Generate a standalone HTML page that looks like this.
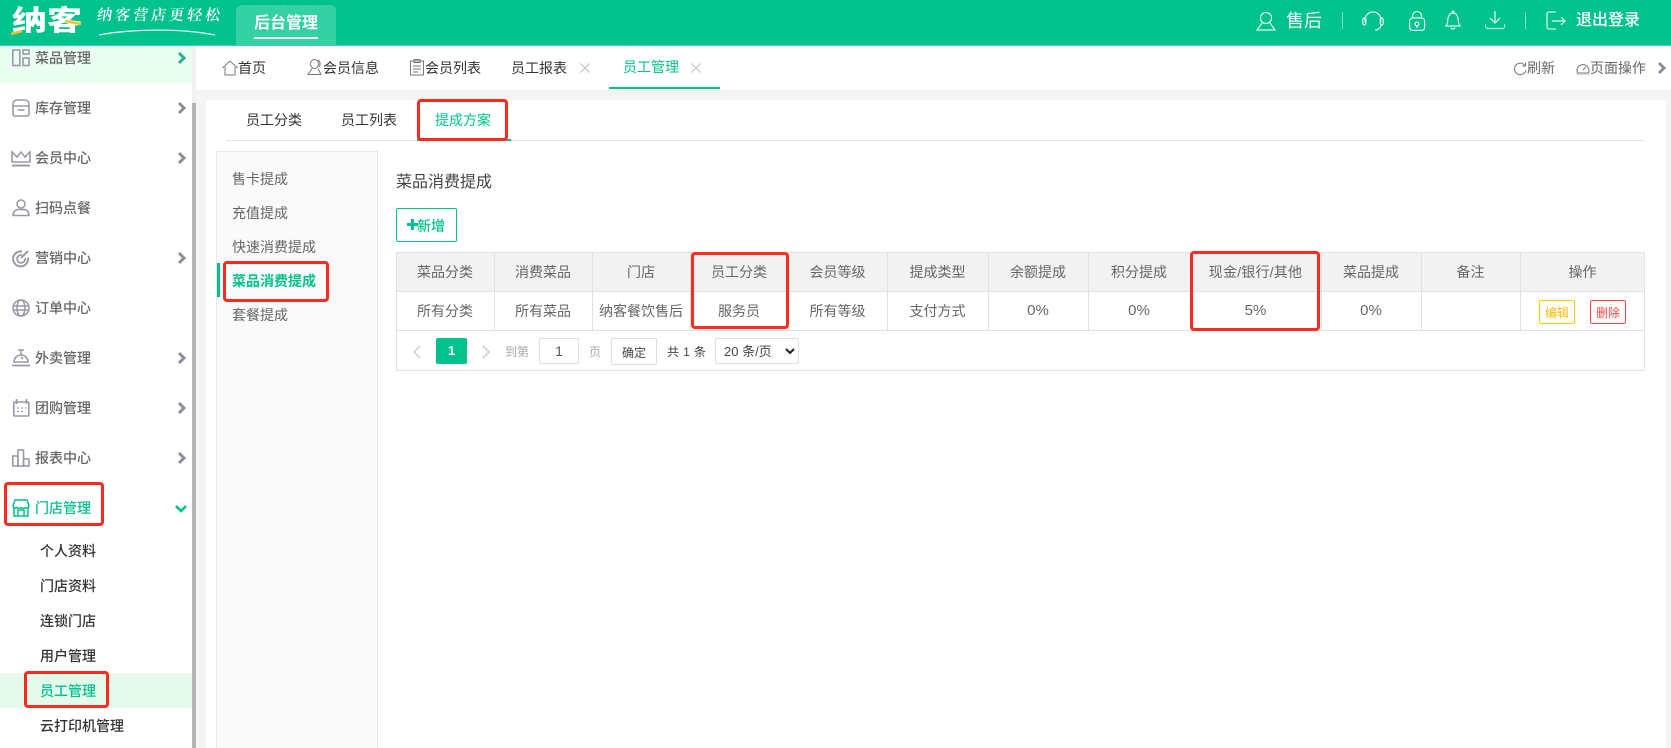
<!DOCTYPE html>
<html lang="zh">
<head>
<meta charset="utf-8">
<title>纳客</title>
<style>
*{box-sizing:border-box;margin:0;padding:0}
html,body{width:1671px;height:748px;overflow:hidden;background:#f4f4f4}
body{position:relative;font-family:"Liberation Sans","Noto Sans CJK SC",sans-serif;font-size:14px;color:#666}
.a{position:absolute}
.t{position:absolute;white-space:nowrap;line-height:20px;height:20px}
svg{position:absolute;overflow:visible;fill:none}
.m{left:35px;color:#666;font-weight:500}
.s{left:40px;color:#333;font-weight:500}
.red{position:absolute;border:3px solid #ff2a1f;border-radius:4px}
.hl{position:absolute;background:#e1e1e1}
.c{position:absolute;text-align:center;line-height:20px;height:20px;white-space:nowrap;color:#666}
.b{position:absolute;background:#fff;border:1px solid #dfdfdf;border-radius:2px;text-align:center;color:#555}
.g{stroke:#9a9aa6;stroke-width:1.6}
.w{stroke:#e0f8ef;stroke-width:1.2}
.d{stroke:#777;stroke-width:1}
.chev{stroke:#8e8e9a;stroke-width:3}
</style>
</head>
<body>
<!-- header -->
<div class="a" style="left:0;top:0;width:1671px;height:46px;background:#00c28c;border-bottom:1px solid #3fd4a8"></div>
<div class="t" style="left:12px;top:1px;height:40px;line-height:40px;font-size:33px;font-weight:900;color:#fff;transform:scale(1.06,.84);transform-origin:left center">纳客</div>
<svg style="left:0;top:0" width="90" height="45"><path d="M11 34l11-3" stroke="#f4c430" stroke-width="2.5"/><path d="M65 21l16 3" stroke="#f4c430" stroke-width="2.5"/></svg>
<div class="t" style="left:97px;top:6px;font-family:'Liberation Serif','Noto Serif CJK SC',serif;font-size:15px;font-weight:600;color:#fff;letter-spacing:3px;transform:skewX(-8deg)">纳客营店更轻松</div>
<svg style="left:0;top:0" width="240" height="45"><path d="M99 35C130 29 180 28 215 35" stroke="#e4f9f1" stroke-width="1.300"/></svg>
<div class="a" style="left:236px;top:5px;width:100px;height:40px;background:#33d1a3;border-radius:6px 6px 0 0"></div>
<div class="t" style="left:254px;top:14px;font-size:16px;font-weight:700;color:#fff">后台管理</div>
<div class="a" style="left:254px;top:37px;width:64px;height:2px;background:#fff"></div>

<svg style="left:1256px;top:11px" width="20" height="20" class="w"><circle cx="10" cy="7" r="5.500"/><path d="M6 12L1 19h18l-5-7"/></svg>
<div class="t" style="left:1286px;top:11px;font-size:18px;color:#fff">售后</div>
<div class="a" style="left:1342px;top:12px;width:1px;height:17px;background:#7fe0c5"></div>
<svg style="left:1362px;top:11px" width="22" height="20" class="w"><path d="M3 11V9a8 8 0 0 1 16 0v2"/><rect x=".8" y="7" width="3" height="7" rx="1.500"/><rect x="18.200" y="7" width="3" height="7" rx="1.500"/><path d="M19 14c0 3-3 5-6 5"/></svg>
<svg style="left:1409px;top:11px" width="16" height="20" class="w"><rect x=".6" y="7" width="15" height="12.400" rx="3"/><path d="M3.500 7V5a4.500 4.500 0 0 1 9 0v2"/><circle cx="8" cy="13" r="2"/><path d="M8 15v2"/></svg>
<svg style="left:1445px;top:10px" width="16" height="21" class="w"><path d="M1 16c2-2 1.500-5 2-8s2.500-5 5-5 4.500 2 5 5 0 6 2 8z"/><circle cx="8" cy="2" r="1"/><path d="M6 17.500c.5 2 3.500 2 4 0"/></svg>
<svg style="left:1485px;top:10px" width="20" height="20" class="w"><path d="M10 1v12M5 8l5 5 5-5"/><path d="M.6 14v2.500a2 2 0 0 0 2 2h15a2 2 0 0 0 2-2V14" stroke="#a8ecd8"/></svg>
<div class="a" style="left:1525px;top:12px;width:1px;height:17px;background:#7fe0c5"></div>
<svg style="left:1546px;top:11px" width="20" height="20" class="w"><path d="M10 1H3a2 2 0 0 0-2 2v13a2 2 0 0 0 2 2h7" stroke="#a8ecd8" stroke-width="1.600"/><path d="M6 10h13M15 6l4 4-4 4"/></svg>
<div class="t" style="left:1576px;top:11px;font-size:16px;font-weight:500;color:#fff">退出登录</div>

<!-- sidebar -->
<div class="a" style="left:0;top:46px;width:192px;height:702px;background:#fff"></div>
<div class="a" style="left:192px;top:46px;width:4px;height:57px;background:#f1f1f1"></div>
<div class="a" style="left:192px;top:103px;width:4px;height:645px;background:#b3b3b3"></div>
<div class="a" style="left:0;top:46px;width:192px;height:37px;background:#eafff1"></div>
<div class="a" style="left:0;top:673px;width:192px;height:35px;background:#e4fbeb"></div>

<svg style="left:12px;top:49px" width="18" height="18" class="g"><rect x=".8" y="1" width="7" height="15.500"/><rect x="11" y="1" width="6" height="4"/><rect x="11" y="9" width="6" height="7.500"/></svg>
<svg style="left:12px;top:99px" width="18" height="18" class="g"><path d="M1 7V5a4 4 0 0 1 4-4h8a4 4 0 0 1 4 4v2z"/><path d="M1 7v8a2 2 0 0 0 2 2h12a2 2 0 0 0 2-2V7"/><path d="M5.500 11h7"/></svg>
<svg style="left:11px;top:150px" width="20" height="18" class="g"><path d="M1 2l5 5 4-5 4 5 5-5v10H1z"/><path d="M1 15.500h18" stroke-width="2"/></svg>
<svg style="left:12px;top:199px" width="18" height="18" class="g"><circle cx="9" cy="5" r="4"/><path d="M1 16.500c0-4 3-6 5-6h6c2 0 5 2 5 6z"/></svg>
<svg style="left:12px;top:249px" width="18" height="18" class="g"><path d="M10 2.500a7.500 7.500 0 1 0 6 6" stroke-width="2"/><path d="M10 6a4 4 0 1 0 3 3" stroke-width="1.800"/><path d="M9 9l7-7" stroke-width="2"/></svg>
<svg style="left:12px;top:299px" width="18" height="18" class="g"><circle cx="9" cy="9" r="8"/><ellipse cx="9" cy="9" rx="4" ry="8"/><path d="M1 7h16M1 11h16"/></svg>
<svg style="left:12px;top:349px" width="18" height="18" class="g"><path d="M2 13a7 7 0 0 1 14 0z"/><path d="M0 16.500h18" stroke-width="1.800"/><path d="M6 1h6M9 1v5M9 8l2 2"/></svg>
<svg style="left:13px;top:399px" width="17" height="18" class="g"><rect x=".8" y="3" width="15" height="14" rx="1"/><path d="M3.500 0v5M13.500 0v5"/><path d="M4 9h2M8 9h2M12 9h1.500M4 12.500h2M8 12.500h2" stroke-width="1.300"/></svg>
<svg style="left:12px;top:449px" width="18" height="18" class="g"><rect x=".8" y="7" width="5" height="10"/><rect x="6" y="1" width="5.500" height="16"/><rect x="11.500" y="10" width="5.500" height="7"/></svg>
<svg style="left:12px;top:499px" width="18" height="18" stroke="#00c28c" stroke-width="1.500"><path d="M3 1h12l2 6a2.500 2.500 0 0 1-4 1.500 3 3 0 0 1-4 0 3 3 0 0 1-4 0A2.500 2.500 0 0 1 1 7z"/><path d="M2 9v8h14V9M6 17v-6h6v6"/></svg>

<div class="t m" style="top:48px">菜品管理</div>
<div class="t m" style="top:98px">库存管理</div>
<div class="t m" style="top:148px">会员中心</div>
<div class="t m" style="top:198px">扫码点餐</div>
<div class="t m" style="top:248px">营销中心</div>
<div class="t m" style="top:298px">订单中心</div>
<div class="t m" style="top:348px">外卖管理</div>
<div class="t m" style="top:398px">团购管理</div>
<div class="t m" style="top:448px">报表中心</div>
<div class="t m" style="top:498px;color:#00c28c">门店管理</div>
<div class="t s" style="top:541px">个人资料</div>
<div class="t s" style="top:576px">门店资料</div>
<div class="t s" style="top:611px">连锁门店</div>
<div class="t s" style="top:646px">用户管理</div>
<div class="t s" style="top:681px;color:#00c28c">员工管理</div>
<div class="t s" style="top:716px">云打印机管理</div>

<svg style="left:178px;top:52px" width="8" height="14" stroke="#2fae8c" stroke-width="3"><path d="M1 1l5 5-5 5"/></svg>
<svg style="left:178px;top:102px" width="8" height="14" class="chev"><path d="M1 1l5 5-5 5"/></svg>
<svg style="left:178px;top:152px" width="8" height="14" class="chev"><path d="M1 1l5 5-5 5"/></svg>
<svg style="left:178px;top:252px" width="8" height="14" class="chev"><path d="M1 1l5 5-5 5"/></svg>
<svg style="left:178px;top:352px" width="8" height="14" class="chev"><path d="M1 1l5 5-5 5"/></svg>
<svg style="left:178px;top:402px" width="8" height="14" class="chev"><path d="M1 1l5 5-5 5"/></svg>
<svg style="left:178px;top:452px" width="8" height="14" class="chev"><path d="M1 1l5 5-5 5"/></svg>
<svg style="left:175px;top:505px" width="12" height="8" stroke="#00c28c" stroke-width="2.600"><path d="M1 1l5 5 5-5"/></svg>

<div class="red" style="left:4px;top:482px;width:100px;height:44px"></div>
<div class="red" style="left:24px;top:671px;width:85px;height:37px"></div>

<!-- tab bar -->
<div class="a" style="left:196px;top:46px;width:1475px;height:44px;background:#fff"></div>
<svg style="left:222px;top:60px" width="16" height="16" class="d"><path d="M.5 8L8 1l7.500 7M3 7v8h10V7"/></svg>
<div class="t" style="left:238px;top:58px;color:#333">首页</div>
<svg style="left:307px;top:59px" width="16" height="17" class="d"><ellipse cx="7.500" cy="5" rx="4" ry="4.500"/><path d="M5 9.500L1 15.500h13l-3-6M11 1c2 1 3 4 1 7"/></svg>
<div class="t" style="left:323px;top:58px;color:#333">会员信息</div>
<svg style="left:410px;top:59px" width="14" height="17" class="d"><rect x=".5" y="2" width="13" height="14"/><rect x="4" y=".5" width="6" height="3"/><path d="M3 7h8M3 10h8M3 13h5"/></svg>
<div class="t" style="left:425px;top:58px;color:#333">会员列表</div>
<div class="t" style="left:511px;top:58px;color:#333">员工报表</div>
<svg style="left:580px;top:63px" width="10" height="10" stroke="#c4c4c4" stroke-width="1.200"><path d="M.5.500l9 9M9.500.500l-9 9"/></svg>
<div class="t" style="left:623px;top:57px;color:#00c28c">员工管理</div>
<svg style="left:691px;top:63px" width="10" height="10" stroke="#c4c4c4" stroke-width="1.200"><path d="M.5.500l9 9M9.500.500l-9 9"/></svg>
<div class="a" style="left:609px;top:87px;width:111px;height:2px;background:#00c28c"></div>

<svg style="left:1514px;top:62px" width="13" height="13" class="d"><path d="M11 3.500A5.800 5.800 0 1 0 12 8M11.500 .5v3.500H8"/></svg>
<div class="t" style="left:1527px;top:58px;color:#666">刷新</div>
<svg style="left:1576px;top:62px" width="14" height="13" class="d"><path d="M1.500 11a6 6 0 1 1 11 0z"/><path d="M7 8l3-3"/><path d="M.5 12h13" stroke="#ccc" stroke-width="1.500"/></svg>
<div class="t" style="left:1590px;top:58px;color:#666">页面操作</div>
<svg style="left:1658px;top:62px" width="8" height="14" class="chev"><path d="M1 1l5 5-5 5"/></svg>

<!-- content -->
<div class="a" style="left:206px;top:100px;width:1460px;height:648px;background:#fff"></div>
<div class="t" style="left:246px;top:110px;color:#333">员工分类</div>
<div class="t" style="left:341px;top:110px;color:#333">员工列表</div>
<div class="t" style="left:435px;top:110px;color:#00c28c">提成方案</div>
<div class="a" style="left:226px;top:140px;width:1419px;height:1px;background:#e4e4e4"></div>
<div class="a" style="left:417px;top:139px;width:94px;height:2px;background:#00c28c"></div>
<div class="red" style="left:417px;top:99px;width:91px;height:42px"></div>

<!-- left submenu -->
<div class="a" style="left:216px;top:151px;width:162px;height:597px;background:#fafafa;border:1px solid #e9e9e9;border-bottom:0"></div>
<div class="t" style="left:232px;top:169px">售卡提成</div>
<div class="t" style="left:232px;top:203px">充值提成</div>
<div class="t" style="left:232px;top:237px">快速消费提成</div>
<div class="a" style="left:217px;top:263px;width:3px;height:34px;background:#00c28c"></div>
<div class="t" style="left:232px;top:271px;color:#00c28c;font-weight:700">菜品消费提成</div>
<div class="t" style="left:232px;top:305px">套餐提成</div>
<div class="red" style="left:223px;top:261px;width:106px;height:41px"></div>

<!-- main -->
<div class="t" style="left:396px;top:173px;font-size:16px;color:#444">菜品消费提成</div>
<div class="a" style="left:396px;top:208px;width:61px;height:34px;border:1px solid #00c28c;border-radius:2px"></div>
<svg style="left:407px;top:219px" width="11" height="11" stroke="#00c28c" stroke-width="3"><path d="M5.500 0v11M0 5.500h11"/></svg>
<div class="t" style="left:417px;top:216px;font-weight:500;color:#00c28c">新增</div>

<!-- table -->
<div class="a" style="left:396px;top:252px;width:1249px;height:39px;background:#f2f2f2"></div>
<div class="a" style="left:396px;top:252px;width:1249px;height:119px;border:1px solid #e3e3e3"></div>
<div class="hl" style="left:396px;top:291px;width:1249px;height:1px"></div>
<div class="hl" style="left:396px;top:330px;width:1249px;height:1px"></div>
<div class="hl" style="left:494px;top:252px;width:1px;height:78px"></div>
<div class="hl" style="left:592px;top:252px;width:1px;height:78px"></div>
<div class="hl" style="left:690px;top:252px;width:1px;height:78px"></div>
<div class="hl" style="left:788px;top:252px;width:1px;height:78px"></div>
<div class="hl" style="left:887px;top:252px;width:1px;height:78px"></div>
<div class="hl" style="left:988px;top:252px;width:1px;height:78px"></div>
<div class="hl" style="left:1088px;top:252px;width:1px;height:78px"></div>
<div class="hl" style="left:1190px;top:252px;width:1px;height:78px"></div>
<div class="hl" style="left:1321px;top:252px;width:1px;height:78px"></div>
<div class="hl" style="left:1421px;top:252px;width:1px;height:78px"></div>
<div class="hl" style="left:1520px;top:252px;width:1px;height:78px"></div>

<div class="c" style="left:396px;top:262px;width:98px">菜品分类</div>
<div class="c" style="left:494px;top:262px;width:98px">消费菜品</div>
<div class="c" style="left:592px;top:262px;width:98px">门店</div>
<div class="c" style="left:690px;top:262px;width:98px">员工分类</div>
<div class="c" style="left:788px;top:262px;width:99px">会员等级</div>
<div class="c" style="left:887px;top:262px;width:101px">提成类型</div>
<div class="c" style="left:988px;top:262px;width:100px">余额提成</div>
<div class="c" style="left:1088px;top:262px;width:102px">积分提成</div>
<div class="c" style="left:1190px;top:262px;width:131px;letter-spacing:.2px">现金/银行/其他</div>
<div class="c" style="left:1321px;top:262px;width:100px">菜品提成</div>
<div class="c" style="left:1421px;top:262px;width:99px">备注</div>
<div class="c" style="left:1520px;top:262px;width:125px">操作</div>

<div class="c" style="left:396px;top:301px;width:98px">所有分类</div>
<div class="c" style="left:494px;top:301px;width:98px">所有菜品</div>
<div class="c" style="left:592px;top:301px;width:98px;font-size:14px">纳客餐饮售后</div>
<div class="c" style="left:690px;top:301px;width:98px">服务员</div>
<div class="c" style="left:788px;top:301px;width:99px">所有等级</div>
<div class="c" style="left:887px;top:301px;width:101px">支付方式</div>
<div class="c" style="left:988px;top:301px;width:100px;font-size:15px">0%</div>
<div class="c" style="left:1088px;top:301px;width:102px;font-size:15px">0%</div>
<div class="c" style="left:1190px;top:301px;width:131px;font-size:15px">5%</div>
<div class="c" style="left:1321px;top:301px;width:100px;font-size:15px">0%</div>
<div class="b" style="left:1539px;top:300px;width:36px;height:24px;border-color:#fc0;color:#fb0;font-size:12px;line-height:24px">编辑</div>
<div class="b" style="left:1590px;top:300px;width:36px;height:24px;border-color:#f44;color:#f44;font-size:12px;line-height:24px">删除</div>

<div class="red" style="left:691px;top:252px;width:98px;height:77px"></div>
<div class="red" style="left:1190px;top:251px;width:130px;height:80px"></div>

<!-- pagination -->
<svg style="left:413px;top:345px" width="8" height="14" stroke="#ccc" stroke-width="1.500"><path d="M7 1L1 7l6 6"/></svg>
<div class="a" style="left:436px;top:338px;width:31px;height:26px;background:#00c28c;border-radius:2px;color:#fff;font-weight:700;font-size:13px;line-height:26px;text-align:center">1</div>
<svg style="left:482px;top:345px" width="8" height="14" stroke="#ccc" stroke-width="1.500"><path d="M1 1l6 6-6 6"/></svg>
<div class="t" style="left:505px;top:342px;font-size:12px;color:#aaa">到第</div>
<div class="b" style="left:539px;top:338px;width:40px;height:26px;line-height:24px;color:#555">1</div>
<div class="t" style="left:589px;top:342px;font-size:12px;color:#aaa">页</div>
<div class="b" style="left:611px;top:338px;width:46px;height:27px;line-height:28px;font-size:12px;color:#444">确定</div>
<div class="t" style="left:667px;top:342px;font-size:12px;color:#444;letter-spacing:.4px">共 1 条</div>
<div class="b" style="left:715px;top:338px;width:84px;height:26px"></div>
<div class="t" style="left:724px;top:342px;font-size:13px;color:#444">20 条/页</div>
<svg style="left:785px;top:348px" width="10" height="7" stroke="#222" stroke-width="2"><path d="M1 1l4 4 4-4"/></svg>
</body>
</html>
